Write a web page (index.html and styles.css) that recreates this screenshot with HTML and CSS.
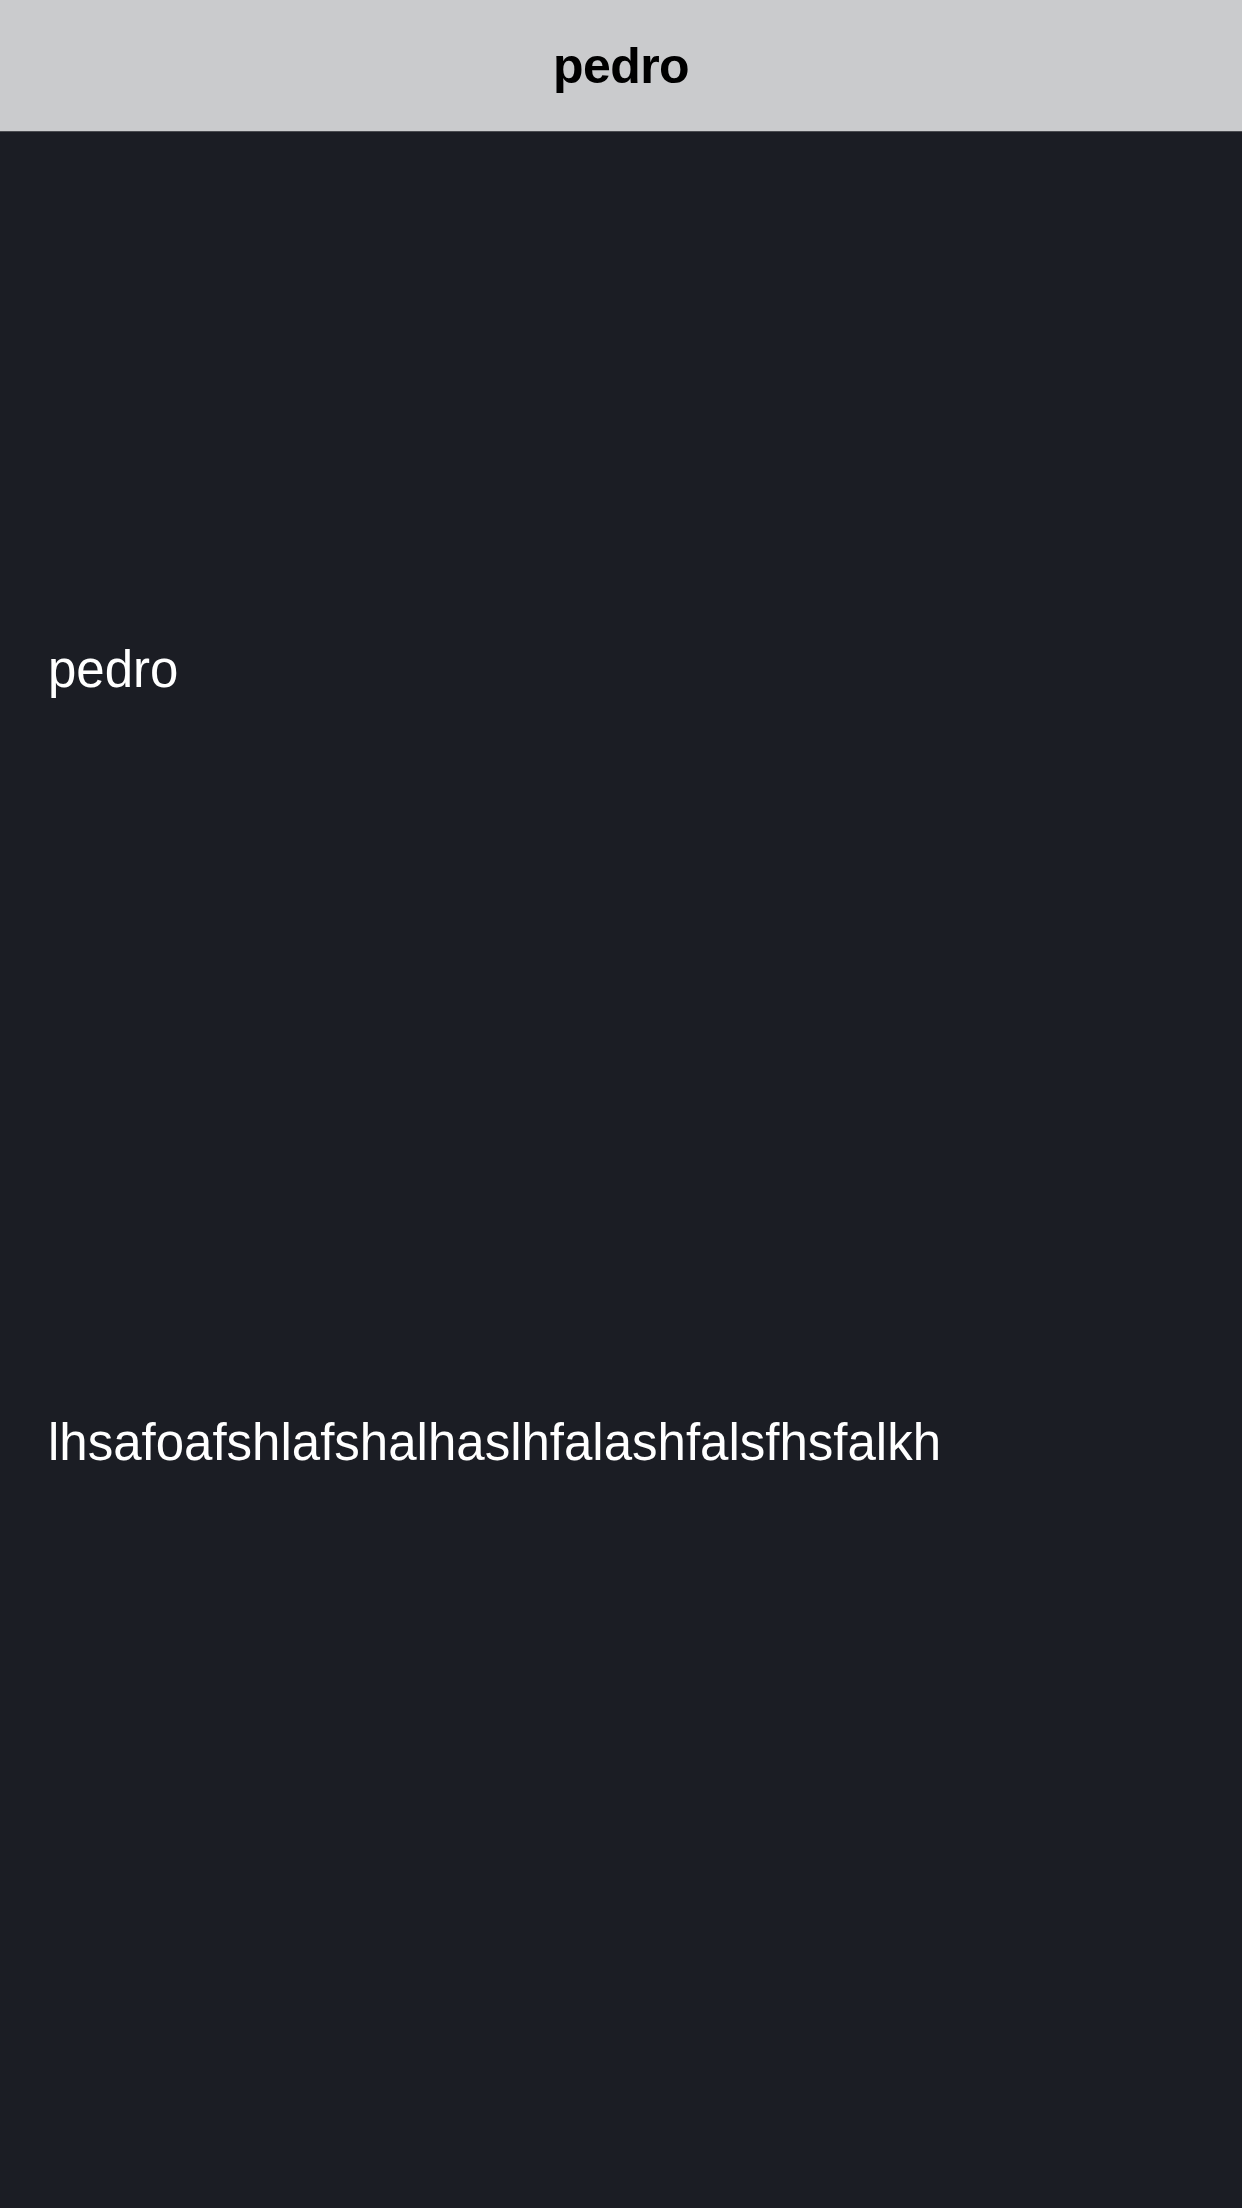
FILE: index.html
```html
<!DOCTYPE html>
<html>
<head>
<meta charset="utf-8">
<link rel="stylesheet" href="styles.css">
</head>
<body>
<header class="navbar">
  <h1 class="navbar-title">pedro</h1>
</header>
<main class="content">
  <p class="item">pedro</p>
  <p class="item">lhsafoafshlafshalhaslhfalashfalsfhsfalkh</p>
</main>
</body>
</html>
```
FILE: styles.css
```css
html, body {
  margin: 0;
  padding: 0;
  background: #1b1d24;
  font-family: "Liberation Sans", Arial, sans-serif;
}
body {
  width: 1242px;
  min-height: 2208px;
}
.navbar {
  height: 131px;
  background: #cacbcd;
  border-bottom: 1px solid #4a4b50;
  display: flex;
  align-items: center;
  justify-content: center;
}
.navbar-title {
  margin: 0;
  font-size: 50px;
  line-height: 58px;
  font-weight: bold;
  letter-spacing: -0.6px;
  color: #000;
}
.content {
  display: flex;
  flex-direction: column;
  gap: 715px;
  padding: 509px 48px 0;
}
.item {
  margin: 0;
  font-size: 51px;
  line-height: 58px;
  color: #ffffff;
}
```
